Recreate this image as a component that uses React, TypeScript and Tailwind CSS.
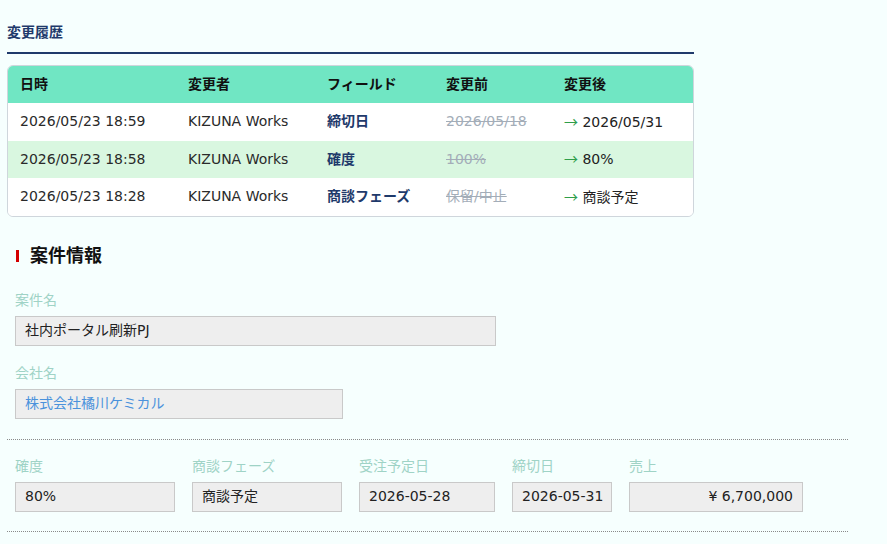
import React from "react";

const font = { fontFamily: '"DejaVu Sans", "Noto Sans CJK JP", sans-serif' };
const cjk = { fontFamily: '"Noto Sans CJK JP", sans-serif' };

const history = [
  { at: "2026/05/23 18:59", by: "KIZUNA Works", field: "締切日", before: "2026/05/18", after: "2026/05/31" },
  { at: "2026/05/23 18:58", by: "KIZUNA Works", field: "確度", before: "100%", after: "80%" },
  { at: "2026/05/23 18:28", by: "KIZUNA Works", field: "商談フェーズ", before: "保留/中止", after: "商談予定" },
];

const cols = "grid grid-cols-[168px_139px_119px_118px_1fr]";

function Field({ label, value, width, className = "" }: { label: string; value: string; width: string; className?: string }) {
  return (
    <div className="flex flex-col shrink-0">
      <div className="text-[14px] leading-[20px] text-[#9fd3c6] mb-[6px]">{label}</div>
      <div className={`${width} h-[30px] flex items-center px-[9px] whitespace-nowrap bg-[#eeeeee] border border-[#c9c9c9] text-[14px] ${className}`}>
        {value}
      </div>
    </div>
  );
}

export default function App() {
  return (
    <div className="min-h-screen w-full bg-[#f6fffe] text-[#222]" style={font}>
      <div className="pl-[7px] pt-[22px] w-[694px]">
        <h2 className="text-[14px] font-bold text-[#1f3a6b] leading-[20px] pb-[10px] border-b-2 border-[#1f3a6b]">変更履歴</h2>
        <div className="mt-[11px] border border-[#cfd6dc] rounded-[6px] overflow-hidden bg-white">
          <div className={`${cols} h-[37px] items-center bg-[#70e6c3] font-bold text-[14px] text-[#111]`}>
            <div className="px-3">日時</div>
            <div className="px-3">変更者</div>
            <div className="px-3">フィールド</div>
            <div className="px-3">変更前</div>
            <div className="px-3">変更後</div>
          </div>
          {history.map((h, idx) => (
            <div key={idx} className={`${cols} h-[37.5px] items-center text-[14px] ${idx % 2 === 1 ? "bg-[#d9f7e0]" : "bg-white"}`}>
              <div className="px-3 text-[#2a2a2a]">{h.at}</div>
              <div className="px-3 text-[#2a2a2a]">{h.by}</div>
              <div className="px-3 font-bold text-[#1f3a6b]">{h.field}</div>
              <div className="px-3 line-through text-[#a3adb8]">{h.before}</div>
              <div className="px-3 text-[#222]">
                <span className="text-[#2f9e4a]" style={cjk}>→</span> {h.after}
              </div>
            </div>
          ))}
        </div>
      </div>

      <div className="pl-[16px] mt-[27px] flex items-center gap-[11px]">
        <span className="w-[3px] h-[12px] bg-[#d40000]"></span>
        <h3 className="text-[18px] font-bold text-[#111] leading-[24px]">案件情報</h3>
      </div>

      <div className="pl-[15px] mt-[22px] flex flex-col gap-[17px]">
        <Field label="案件名" value="社内ポータル刷新PJ" width="w-[481px]" />
        <Field label="会社名" value="株式会社橘川ケミカル" width="w-[328px]" className="text-[#4a92dc]" />
      </div>

      <div className="ml-[7px] w-[841px] mt-[20px] border-t border-b border-dotted border-[#8a8a8a] pt-[16px] pb-[19px] pl-[8px] flex gap-[17px]">
        <Field label="確度" value="80%" width="w-[160px]" />
        <Field label="商談フェーズ" value="商談予定" width="w-[150px]" />
        <Field label="受注予定日" value="2026-05-28" width="w-[136px]" />
        <Field label="締切日" value="2026-05-31" width="w-[100px] px-[8px]" />
        <Field label="売上" value="¥ 6,700,000" width="w-[174px] justify-end" />
      </div>
    </div>
  );
}
